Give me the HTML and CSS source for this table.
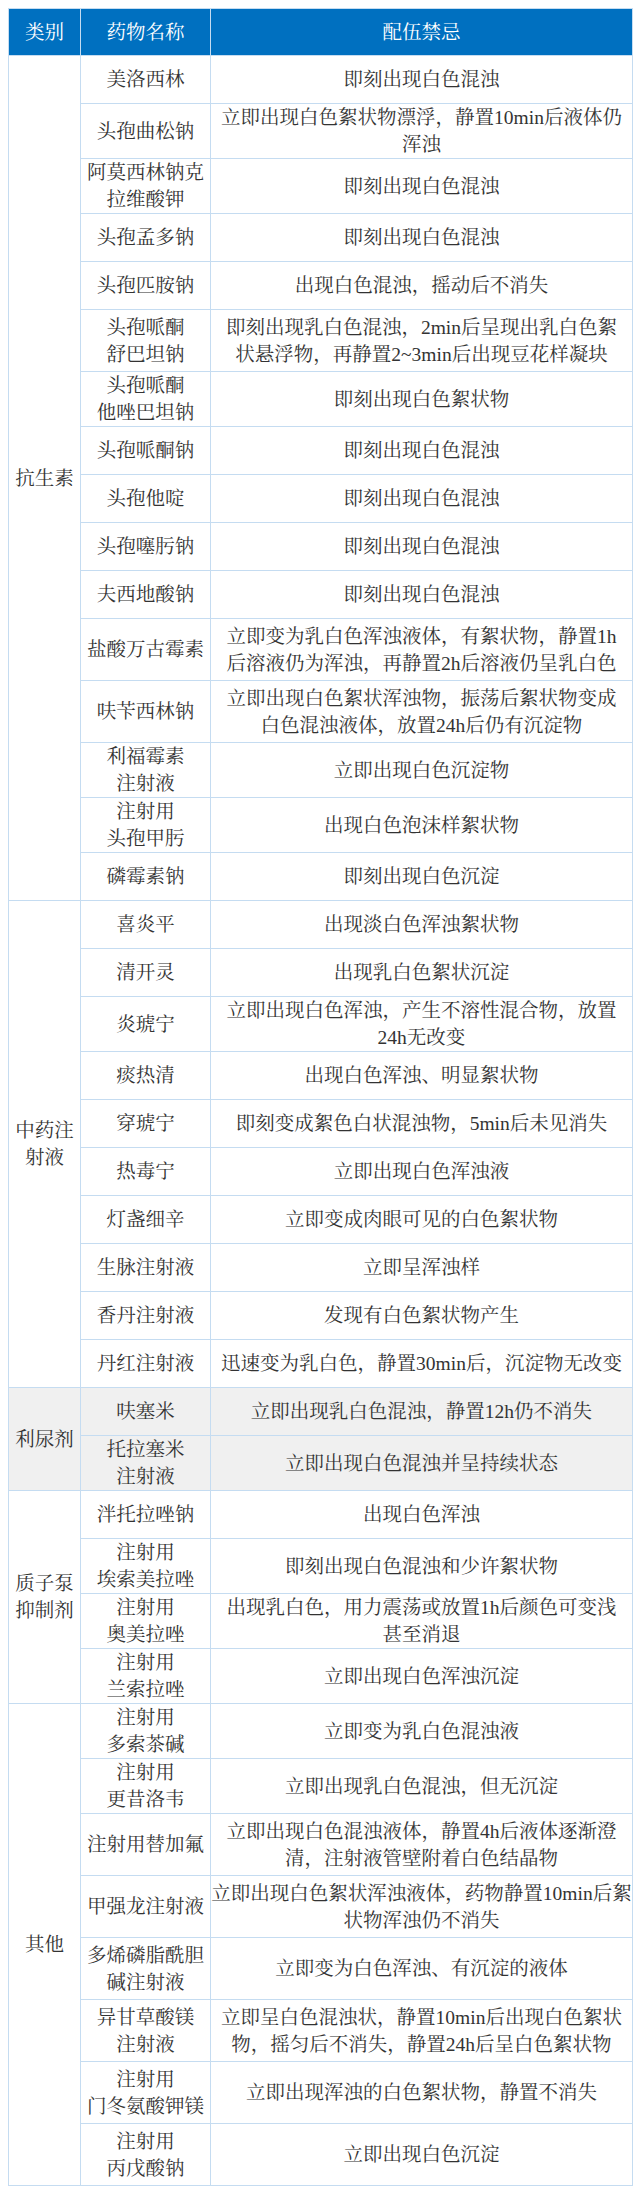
FILE: index.html
```html
<!DOCTYPE html>
<html lang="zh-CN">
<head>
<meta charset="utf-8">
<title>配伍禁忌</title>
<link rel="stylesheet" href="styles.css">
</head>
<body>
<table class="grid">
  <colgroup>
    <col class="c-cat">
    <col class="c-name">
    <col class="c-desc">
  </colgroup>
  <thead>
    <tr class="head">
      <th>类别</th>
      <th>药物名称</th>
      <th>配伍禁忌</th>
    </tr>
  </thead>
  <tbody>
    <tr class="s"><td class="cat" rowspan="16">抗生素</td><td class="name">美洛西林</td><td class="desc">即刻出现白色混浊</td></tr>
    <tr class="m"><td class="name">头孢曲松钠</td><td class="desc">立即出现白色絮状物漂浮，静置10min后液体仍<br>浑浊</td></tr>
    <tr class="m"><td class="name">阿莫西林钠克<br>拉维酸钾</td><td class="desc">即刻出现白色混浊</td></tr>
    <tr class="s"><td class="name">头孢孟多钠</td><td class="desc">即刻出现白色混浊</td></tr>
    <tr class="s"><td class="name">头孢匹胺钠</td><td class="desc">出现白色混浊，摇动后不消失</td></tr>
    <tr class="l"><td class="name">头孢哌酮<br>舒巴坦钠</td><td class="desc">即刻出现乳白色混浊，2min后呈现出乳白色絮<br>状悬浮物，再静置2~3min后出现豆花样凝块</td></tr>
    <tr class="m"><td class="name">头孢哌酮<br>他唑巴坦钠</td><td class="desc">即刻出现白色絮状物</td></tr>
    <tr class="s"><td class="name">头孢哌酮钠</td><td class="desc">即刻出现白色混浊</td></tr>
    <tr class="s"><td class="name">头孢他啶</td><td class="desc">即刻出现白色混浊</td></tr>
    <tr class="s"><td class="name">头孢噻肟钠</td><td class="desc">即刻出现白色混浊</td></tr>
    <tr class="s"><td class="name">夫西地酸钠</td><td class="desc">即刻出现白色混浊</td></tr>
    <tr class="l"><td class="name">盐酸万古霉素</td><td class="desc">立即变为乳白色浑浊液体，有絮状物，静置1h<br>后溶液仍为浑浊，再静置2h后溶液仍呈乳白色</td></tr>
    <tr class="l"><td class="name">呋苄西林钠</td><td class="desc">立即出现白色絮状浑浊物，振荡后絮状物变成<br>白色混浊液体，放置24h后仍有沉淀物</td></tr>
    <tr class="m"><td class="name">利福霉素<br>注射液</td><td class="desc">立即出现白色沉淀物</td></tr>
    <tr class="m"><td class="name">注射用<br>头孢甲肟</td><td class="desc">出现白色泡沫样絮状物</td></tr>
    <tr class="s"><td class="name">磷霉素钠</td><td class="desc">即刻出现白色沉淀</td></tr>

    <tr class="s"><td class="cat" rowspan="10">中药注射液</td><td class="name">喜炎平</td><td class="desc">出现淡白色浑浊絮状物</td></tr>
    <tr class="s"><td class="name">清开灵</td><td class="desc">出现乳白色絮状沉淀</td></tr>
    <tr class="m"><td class="name">炎琥宁</td><td class="desc">立即出现白色浑浊，产生不溶性混合物，放置<br>24h无改变</td></tr>
    <tr class="s"><td class="name">痰热清</td><td class="desc">出现白色浑浊、明显絮状物</td></tr>
    <tr class="s"><td class="name">穿琥宁</td><td class="desc">即刻变成絮色白状混浊物，5min后未见消失</td></tr>
    <tr class="s"><td class="name">热毒宁</td><td class="desc">立即出现白色浑浊液</td></tr>
    <tr class="s"><td class="name">灯盏细辛</td><td class="desc">立即变成肉眼可见的白色絮状物</td></tr>
    <tr class="s"><td class="name">生脉注射液</td><td class="desc">立即呈浑浊样</td></tr>
    <tr class="s"><td class="name">香丹注射液</td><td class="desc">发现有白色絮状物产生</td></tr>
    <tr class="s"><td class="name">丹红注射液</td><td class="desc">迅速变为乳白色，静置30min后，沉淀物无改变</td></tr>

    <tr class="s shade"><td class="cat" rowspan="2">利尿剂</td><td class="name">呋塞米</td><td class="desc">立即出现乳白色混浊，静置12h仍不消失</td></tr>
    <tr class="m shade"><td class="name">托拉塞米<br>注射液</td><td class="desc">立即出现白色混浊并呈持续状态</td></tr>

    <tr class="s"><td class="cat" rowspan="4">质子泵抑制剂</td><td class="name">泮托拉唑钠</td><td class="desc">出现白色浑浊</td></tr>
    <tr class="m"><td class="name">注射用<br>埃索美拉唑</td><td class="desc">即刻出现白色混浊和少许絮状物</td></tr>
    <tr class="m"><td class="name">注射用<br>奥美拉唑</td><td class="desc">出现乳白色，用力震荡或放置1h后颜色可变浅<br>甚至消退</td></tr>
    <tr class="m"><td class="name">注射用<br>兰索拉唑</td><td class="desc">立即出现白色浑浊沉淀</td></tr>

    <tr class="m"><td class="cat" rowspan="8">其他</td><td class="name">注射用<br>多索茶碱</td><td class="desc">立即变为乳白色混浊液</td></tr>
    <tr class="m"><td class="name">注射用<br>更昔洛韦</td><td class="desc">立即出现乳白色混浊，但无沉淀</td></tr>
    <tr class="l"><td class="name">注射用替加氟</td><td class="desc">立即出现白色混浊液体，静置4h后液体逐渐澄<br>清，注射液管壁附着白色结晶物</td></tr>
    <tr class="l"><td class="name">甲强龙注射液</td><td class="desc">立即出现白色絮状浑浊液体，药物静置10min后絮<br>状物浑浊仍不消失</td></tr>
    <tr class="l"><td class="name">多烯磷脂酰胆<br>碱注射液</td><td class="desc">立即变为白色浑浊、有沉淀的液体</td></tr>
    <tr class="l"><td class="name">异甘草酸镁<br>注射液</td><td class="desc">立即呈白色混浊状，静置10min后出现白色絮状<br>物，摇匀后不消失，静置24h后呈白色絮状物</td></tr>
    <tr class="l"><td class="name">注射用<br>门冬氨酸钾镁</td><td class="desc">立即出现浑浊的白色絮状物，静置不消失</td></tr>
    <tr class="l"><td class="name">注射用<br>丙戊酸钠</td><td class="desc">立即出现白色沉淀</td></tr>
  </tbody>
</table>
</body>
</html>
```

FILE: styles.css
```css
html, body {
  margin: 0;
  padding: 0;
  background: #ffffff;
}

body {
  padding: 8px;
  font-family: "Liberation Serif", "Noto Serif CJK SC", "Noto Sans CJK SC", serif;
  color: #333333;
}

.grid {
  width: 624px;
  border-collapse: collapse;
  table-layout: fixed;
  font-size: 19.5px;
  line-height: 27px;
}

.c-cat { width: 72px; }
.c-name { width: 130px; }
.c-desc { width: 422px; }

.grid th,
.grid td {
  border: 1px solid #c5dcf1;
  padding: 0 2px;
  text-align: center;
  vertical-align: middle;
  white-space: nowrap;
  font-weight: 400;
}

.grid td.desc {
  padding: 0;
}

.grid td.cat {
  white-space: normal;
  padding: 0 5px;
}

.head {
  height: 47px;
}

.head th {
  background: #0070c0;
  color: #ffffff;
  border-color: #c5dcf1;
}

tr.s { height: 48px; }
tr.m { height: 55px; }
tr.l { height: 62px; }

tr.shade td {
  background: #f0f0f0;
}
```
